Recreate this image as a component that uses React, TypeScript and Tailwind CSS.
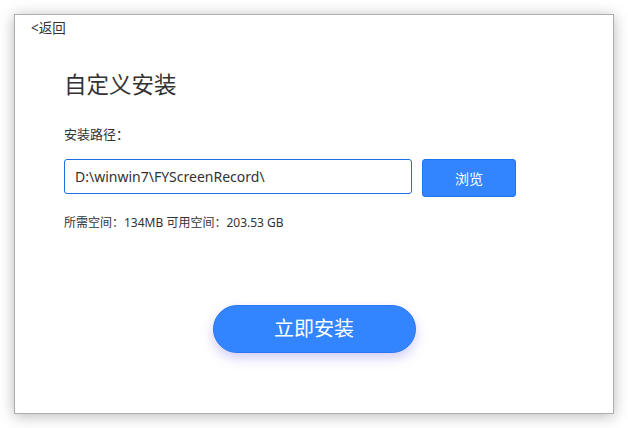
export default function App() {
  return (
    <div className="w-[628px] h-[428px] bg-white p-[14px] font-['Noto_Sans','Noto_Sans_CJK_SC',sans-serif] text-[#333333]">
      <div className="w-[600px] h-[400px] bg-white border border-[#adadad] shadow-[0_2px_14px_rgba(0,0,0,0.28)] flex flex-col">
        <div className="pl-[16px] pt-[5px] text-[13.5px] leading-[17px] cursor-pointer">&lt;返回</div>

        <div className="pl-[49px] flex flex-col">
          <h1 className="mt-[33px] text-[22.5px] leading-[30px] font-normal">自定义安装</h1>

          <div className="mt-[26px] text-[13px] leading-[17px]">安装路径：</div>

          <div className="mt-[16px] flex items-start">
            <div className="w-[348px] h-[35px] border border-[#1e6fe6] rounded-[3px] flex items-center pl-[10px] text-[14px]">
              D:\winwin7\FYScreenRecord\
            </div>
            <button className="ml-[10px] w-[94px] h-[38px] bg-[#3385ff] border border-[#1f74ee] rounded-[3px] text-white text-[14px]">
              浏览
            </button>
          </div>

          <div className="mt-[18px] text-[12px] leading-[16px]">
            所需空间：134MB 可用空间：203.53 GB
          </div>
        </div>

        <div className="mt-[74px] flex justify-center">
          <button className="w-[203px] h-[48px] rounded-full bg-[#3385ff] border border-[#2a78f0] text-white text-[20px] shadow-[0_5px_12px_rgba(120,110,230,0.35)]">
            立即安装
          </button>
        </div>
      </div>
    </div>
  );
}
